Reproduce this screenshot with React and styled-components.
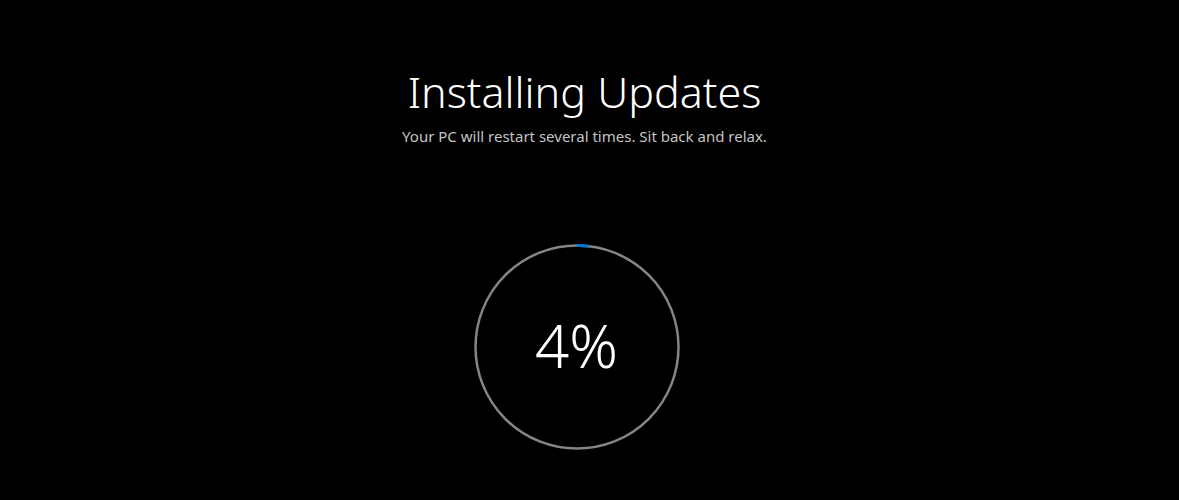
import React from "react";
import styled, { createGlobalStyle } from "styled-components";

const GlobalStyle = createGlobalStyle`
  html, body {
    margin: 0;
    padding: 0;
    background: #000000;
  }
  body {
    font-family: "Noto Sans", "Open Sans", "Liberation Sans", sans-serif;
  }
`;

const Screen = styled.div`
  width: 1179px;
  height: 500px;
  background: #000000;
  display: flex;
  flex-direction: column;
  align-items: center;
  padding-right: 10px;
  box-sizing: border-box;
  overflow: hidden;
`;

const Title = styled.h1`
  margin: 64px 0 0;
  font-size: 43px;
  font-weight: 300;
  line-height: 56px;
  color: #ffffff;
  letter-spacing: 0;
`;

const Subtitle = styled.p`
  margin: 6px 0 0;
  font-size: 15px;
  line-height: 20px;
  color: #c4c4c4;
`;

const Ring = styled.div`
  position: relative;
  width: 206px;
  height: 206px;
  margin: 98px 16px 0 0;
  display: flex;
  align-items: center;
  justify-content: center;

  svg {
    position: absolute;
    inset: 0;
  }
`;

const Percent = styled.span`
  position: relative;
  top: -2px;
  font-size: 60px;
  font-weight: 300;
  color: #ffffff;
  line-height: 1;
`;

const R = 101.5;
const C = 2 * Math.PI * R;

function ProgressRing({ children }) {
  return (
    <Ring>
      <svg width="206" height="206" viewBox="0 0 206 206">
        <circle cx="103" cy="103" r={R} fill="none" stroke="#858585" strokeWidth="2.5" />
        <circle
          cx="103"
          cy="103"
          r={R}
          fill="none"
          stroke="#0078d7"
          strokeWidth="3"
          strokeDasharray={`14 ${C}`}
          strokeDashoffset="2"
          transform="rotate(-90 103 103)"
        />
      </svg>
      <Percent>{children}</Percent>
    </Ring>
  );
}

export default function App() {
  return (
    <>
      <GlobalStyle />
      <Screen>
        <Title>Installing Updates</Title>
        <Subtitle>Your PC will restart several times. Sit back and relax.</Subtitle>
        <ProgressRing>4%</ProgressRing>
      </Screen>
    </>
  );
}
